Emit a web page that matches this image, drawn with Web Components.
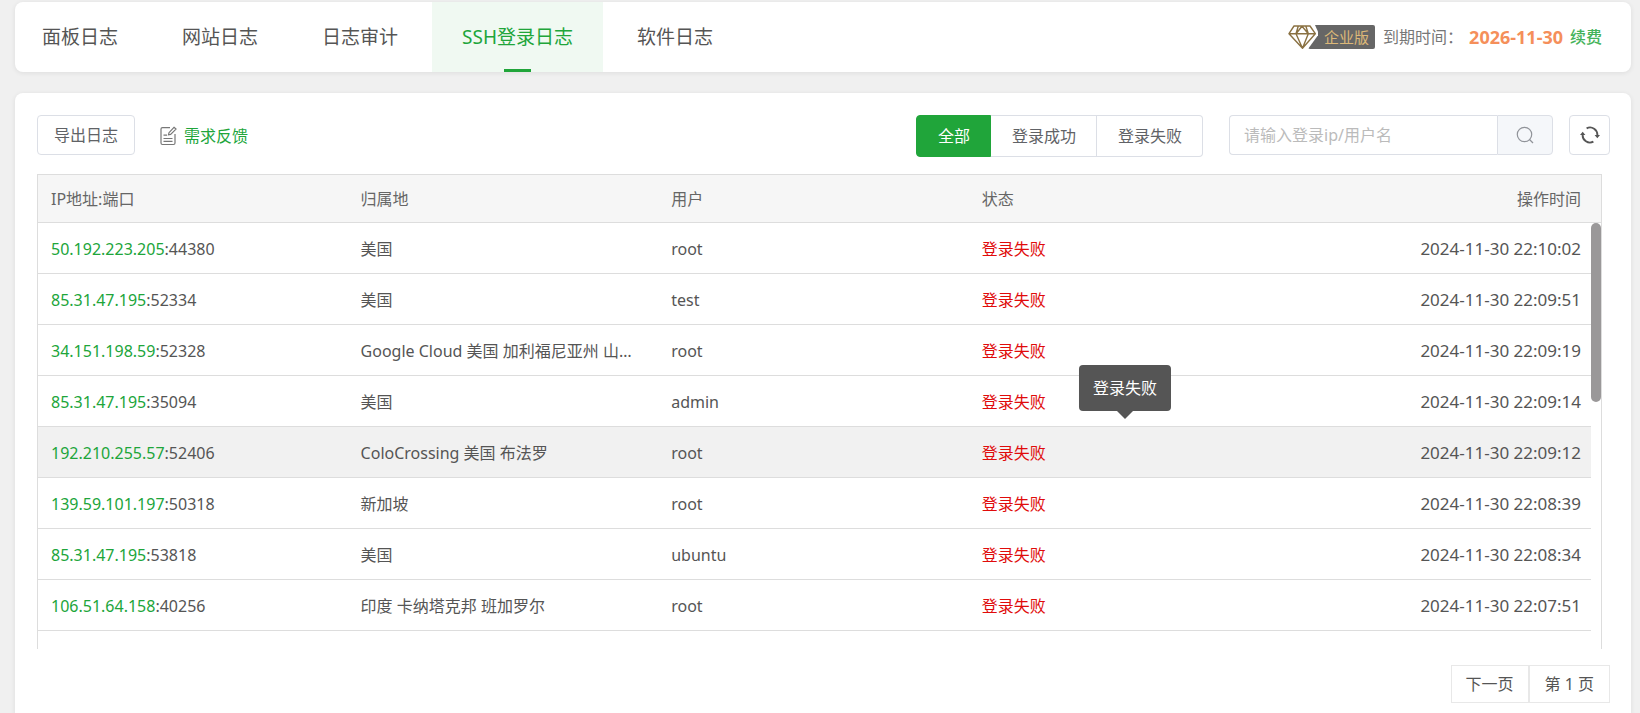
<!DOCTYPE html>
<html lang="zh-CN">
<head>
<meta charset="utf-8">
<title>SSH登录日志</title>
<style>
  html, body { margin: 0; height: 100%; }
  body {
    background: #f0f0f0;
    color: #555;
    font: 16px/24px "Noto Sans", "Noto Sans CJK SC", sans-serif;
    --green: #20a53a;
    --line: #dcdfe6;
  }
</style>
</head>
<body>
<log-page>
  <log-tabs slot="nav">
    <log-tab>面板日志</log-tab>
    <log-tab>网站日志</log-tab>
    <log-tab>日志审计</log-tab>
    <log-tab active>SSH登录日志</log-tab>
    <log-tab>软件日志</log-tab>
    <license-info slot="extra" date="2026-11-30">企业版</license-info>
  </log-tabs>
  <log-toolbar></log-toolbar>
  <log-table></log-table>
  <log-pager page="1"></log-pager>
</log-page>

<script>
class Base extends HTMLElement {
  constructor() {
    super();
    this.attachShadow({ mode: 'open' });
  }
  connectedCallback() {
    const t = document.createElement('template');
    t.innerHTML = '<style>*{box-sizing:border-box}button,input{font:inherit;color:inherit;margin:0;outline:0}a{text-decoration:none}' +
      this.css() + '</style>' + this.html();
    this.shadowRoot.replaceChildren(t.content.cloneNode(true));
  }
}

customElements.define('log-page', class extends Base {
  css() { return `
    :host { display: flex; flex-direction: column; gap: 21px; box-sizing: border-box; height: 100%; padding: 2px 9px 0 15px; overflow: hidden; }
    header, main { background: #fff; box-shadow: 0 1px 4px 1px rgba(0,0,0,.06); }
    header { border-radius: 8px; }
    main { flex: 1; border-radius: 8px 8px 0 0; padding: 22px 21px 0 22px; }`; }
  html() { return `<header><slot name="nav"></slot></header><main><slot></slot></main>`; }
});

customElements.define('log-tabs', class extends Base {
  css() { return `
    :host { display: flex; justify-content: space-between; align-items: center; height: 70px; padding-right: 29px; }
    nav { display: flex; gap: 4px; height: 100%; }
    ::slotted(log-tab:first-child) { --tab-start: 27px; }`; }
  html() { return `<nav><slot></slot></nav><slot name="extra"></slot>`; }
});

customElements.define('log-tab', class extends Base {
  css() { return `
    :host { display: block; font-size: 19px; }
    a { position: relative; display: flex; align-items: center; height: 100%; padding: 0 30px 0 var(--tab-start, 30px); color: #555; white-space: nowrap; }
    :host([active]) a { color: var(--green); background: #f0f9f2; }
    :host([active]) a::after { content: ""; position: absolute; left: 50%; bottom: 0; width: 27px; height: 3px; margin-left: -14px; background: var(--green); }`; }
  html() { return `<a href="#"><span><slot></slot></span></a>`; }
});

customElements.define('license-info', class extends Base {
  css() { return `
    :host { display: flex; align-items: center; white-space: nowrap; }
    svg { display: block; width: 30px; height: 24px; margin-right: -10px; position: relative; }
    .badge { height: 24px; padding: 0 6px 0 16px; background: #666; color: #dcb878; border-radius: 2px; font-size: 15px; }
    .label { margin-left: 8px; color: #777; }
    b { margin-left: 6px; font-size: 18px; color: #f58f5a; }
    a { margin-left: 7px; color: #45b35a; font-weight: 500; }`; }
  html() { return `
    <svg viewBox="0 0 30 24" fill="none" aria-hidden="true">
      <path d="M0 0H27L31 9L20 24H0Z" fill="#fff"/>
      <path d="M6 1H22L27.300 8.700L14.500 23.200L1 8.700ZM1 8.700H27.300M10.300 1L8 8.700L14.500 23.200L20.300 8.700L17.800 1M8 8.700L14 1.300L20.300 8.700" stroke="#8a7142" stroke-width="1.400" stroke-linejoin="round"/>
    </svg>
    <span class="badge"><slot></slot></span>
    <span class="label">到期时间：</span><b>${this.getAttribute('date')}</b><a href="#">续费</a>`; }
});

customElements.define('log-toolbar', class extends Base {
  css() { return `
    :host { display: flex; align-items: flex-start; height: 42px; margin-bottom: 17px; white-space: nowrap; }
    button { background: #fff; border: 1px solid var(--line); color: #606266; border-radius: 4px; padding: 0; }
    .export { height: 40px; padding: 0 16px; }
    .feedback { display: flex; align-items: center; gap: 7px; height: 42px; margin-left: 25px; color: var(--green); }
    .group { display: flex; margin-left: auto; }
    .group button { height: 42px; padding: 0 20px 0 21px; border-left: 0; border-radius: 0; }
    .group .on { padding: 0 20px 0 21px; border: 1px solid var(--green); background: var(--green); color: #fff; border-radius: 4px 0 0 4px; }
    .group button:last-child { border-radius: 0 4px 4px 0; }
    form { display: flex; width: 324px; height: 40px; margin: 0 16px 0 26px; }
    input { flex: 1; min-width: 0; border: 1px solid var(--line); border-right: 0; border-radius: 4px 0 0 4px; padding: 0 14px; background: #fff; }
    input::placeholder { color: #bbb; opacity: 1; }
    form button { display: flex; width: 56px; align-items: center; justify-content: center; background: #f5f7fa; border-radius: 0 4px 4px 0; }
    .refresh { display: flex; align-items: center; justify-content: center; width: 41px; height: 40px; }
    svg { display: block; }`; }
  html() { return `
    <button class="export" type="button">导出日志</button>
    <a class="feedback" href="#">
      <svg width="17" height="20" viewBox="0 0 17 20" fill="none" stroke="#777" stroke-width="1.200" aria-hidden="true">
        <path d="M10 1.600H2.500Q1 1.600 1 3.100V17Q1 18.500 2.500 18.500H13.500Q15 18.500 15 17V8"/>
        <path d="M3.500 9.200H7M3.500 12.500H12.500M3.500 15.300H12.500"/>
        <path d="M14 1.300L16 3.100L10.600 8.400L8.500 8.800L9 6.700Z"/>
      </svg>需求反馈</a>
    <div class="group" role="group" aria-label="登录状态">
      <button class="on" type="button" aria-pressed="true">全部</button>
      <button type="button">登录成功</button>
      <button type="button">登录失败</button>
    </div>
    <form onsubmit="return false" role="search">
      <input type="text" aria-label="登录ip/用户名" placeholder="请输入登录ip/用户名">
      <button type="submit" aria-label="搜索">
        <svg width="18" height="18" viewBox="0 0 18 18" fill="none" stroke="#909399" stroke-width="1.200"><circle cx="8.500" cy="8.500" r="7.200"/><path d="M13.500 13.500L17 17"/></svg>
      </button>
    </form>
    <button class="refresh" type="button" aria-label="刷新">
      <svg width="20" height="18" viewBox="0 0 20 18" fill="none" stroke="#555" stroke-width="1.900">
        <path d="M6.600 2.300A7.300 7.300 0 0 1 17.300 9.500M13.400 15.700A7.300 7.300 0 0 1 2.700 8.500"/>
        <path d="M14.600 9H20L17.300 12.200ZM0 9H5.400L2.700 5.800Z" fill="#555" stroke="none"/>
      </svg>
    </button>`; }
});

const ROWS = [
  ['50.192.223.205', '44380', '美国', 'root', '22:10:02'],
  ['85.31.47.195', '52334', '美国', 'test', '22:09:51'],
  ['34.151.198.59', '52328', 'Google Cloud 美国 加利福尼亚州 山景城', 'root', '22:09:19'],
  ['85.31.47.195', '35094', '美国', 'admin', '22:09:14'],
  ['192.210.255.57', '52406', 'ColoCrossing 美国 布法罗', 'root', '22:09:12', true],
  ['139.59.101.197', '50318', '新加坡', 'root', '22:08:39'],
  ['85.31.47.195', '53818', '美国', 'ubuntu', '22:08:34'],
  ['106.51.64.158', '40256', '印度 卡纳塔克邦 班加罗尔', 'root', '22:07:51'],
  ['85.31.47.195', '40822', '美国', 'root', '22:07:40']
];

customElements.define('log-table', class extends Base {
  css() { return `
    :host { display: flex; height: 475px; box-sizing: border-box; margin-right: 8px; border: 1px solid #ddd; border-bottom: 0; }
    .scroll { flex: 1; min-width: 0; overflow: hidden; }
    .rail { width: 10px; }
    .cap { height: 48px; background: #f6f6f6; border-bottom: 1px solid #ddd; }
    .thumb { height: 179px; background: #9a9899; border-radius: 5px; }
    table { width: 100%; table-layout: fixed; border-collapse: separate; border-spacing: 0; }
    th, td { padding: 0 16px 0 12px; text-align: left; font-weight: 400; border-bottom: 1px solid #ddd; white-space: nowrap; }
    th { height: 48px; background: #f6f6f6; color: #666; }
    td { height: 51px; padding-top: 2px; }
    th:first-child, td:first-child { padding-left: 13px; }
    th:last-child, td:last-child { text-align: right; padding-right: 10px; }
    td:last-child { font-size: 17px; }
    td:nth-child(2) { overflow: hidden; text-overflow: ellipsis; }
    td:nth-child(4) { position: relative; }
    a { color: var(--green); }
    .fail { color: #e00b0b; }
    .hover td { background: #f1f1f1; }
    .tip { position: absolute; left: 50%; bottom: 100%; transform: translateX(-50%); margin-bottom: 16px; padding: 11px 14px; background: #555; color: #fff; border-radius: 4px; }
    .tip::after { content: ""; position: absolute; left: 50%; top: 100%; margin-left: -8px; border: 8px solid transparent; border-bottom: 0; border-top-color: #555; }`; }
  html() {
    const rows = ROWS.map(([ip, port, place, user, time, hover]) => `
      <tr${hover ? ' class="hover"' : ''}><td><a href="#">${ip}</a>:${port}</td><td>${place}</td><td>${user}</td>
      <td><span class="fail">登录失败</span>${hover ? '<div class="tip" role="tooltip">登录失败</div>' : ''}</td><td>2024-11-30 ${time}</td></tr>`).join('');
    return `<div class="scroll"><table>
      <thead><tr><th>IP地址:端口</th><th>归属地</th><th>用户</th><th>状态</th><th>操作时间</th></tr></thead>
      <tbody>${rows}</tbody></table></div>
      <div class="rail"><div class="cap"></div><div class="thumb"></div></div>`;
  }
});

customElements.define('log-pager', class extends Base {
  css() { return `
    :host { display: flex; justify-content: flex-end; margin-top: 16px; }
    button, span { height: 38px; padding: 0 14px; border: 1px solid #e8e8e8; background: #fff; color: #555; line-height: 36px; }
    span { padding: 0 15px; }`; }
  html() { return `<button type="button">下一页</button><span>第 ${this.getAttribute('page')} 页</span>`; }
});
</script>
</body>
</html>
